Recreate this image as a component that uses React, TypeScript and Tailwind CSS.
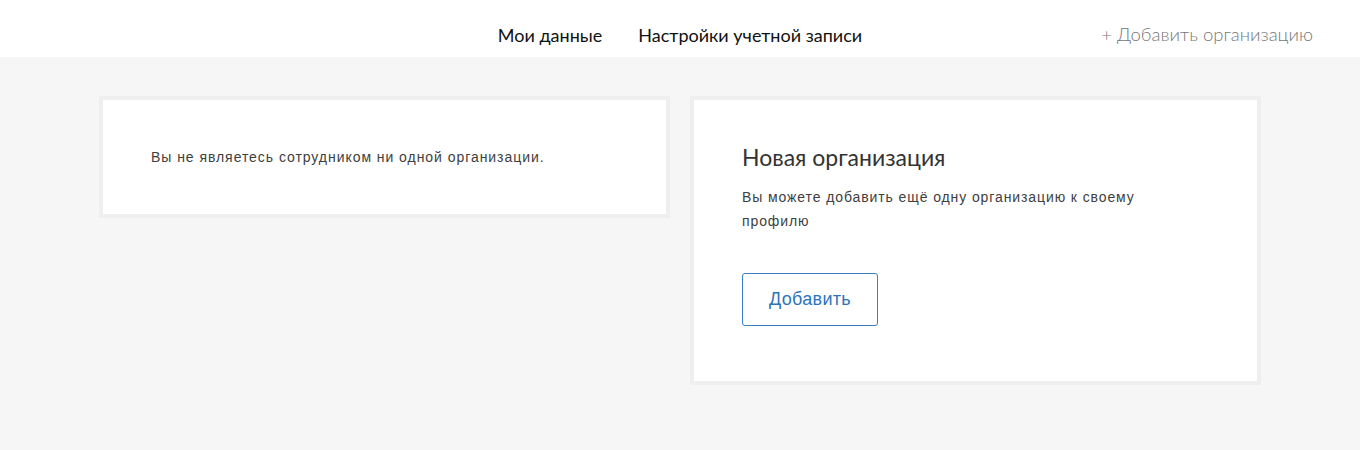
import React from "react";

const sans = { fontFamily: "'Liberation Sans', Arial, sans-serif" };

export default function App() {
  return (
    <div className="min-h-[450px] bg-[#f5f6f5]" style={{ fontFamily: "Lato, 'Liberation Sans', sans-serif" }}>
      <header className="h-[57px] bg-white grid grid-cols-[1fr_auto_1fr] items-center pt-[13px]">
        <div />
        <nav className="flex items-center gap-[36px] text-[18px] text-[#111111]">
          <span>Мои данные</span>
          <span>Настройки учетной записи</span>
        </nav>
        <div className="flex justify-end pr-[47px]">
          <span className="text-[18.5px] font-light text-[#77787a]">+ Добавить организацию</span>
        </div>
      </header>
      <main className="w-[1162px] mx-auto pt-[39px] pb-[65px] flex gap-[20px] items-start">
        <div className="flex-1 bg-white border-4 border-[#eeefee] pt-[47px] pb-[47px] px-[48px]">
          <p className="text-[14px] leading-[20px] text-[#404040] tracking-[0.95px]" style={sans}>
            Вы не являетесь сотрудником ни одной организации.
          </p>
        </div>
        <div className="flex-1 bg-white border-4 border-[#eeefee] pt-[43px] pb-[55px] px-[48px]">
          <h2 className="text-[23px] leading-[28px] text-[#333333]">Новая организация</h2>
          <p className="mt-[14px] text-[14px] leading-[24px] text-[#404040] tracking-[0.9px] w-[420px]" style={sans}>
            Вы можете добавить ещё одну организацию к своему профилю
          </p>
          <button className="mt-[40px] w-[136px] h-[53px] border border-[#3a7fc4] rounded-[3px] text-[18px] tracking-[0.3px] text-[#2e74bd]" style={sans}>
            Добавить
          </button>
        </div>
      </main>
    </div>
  );
}
